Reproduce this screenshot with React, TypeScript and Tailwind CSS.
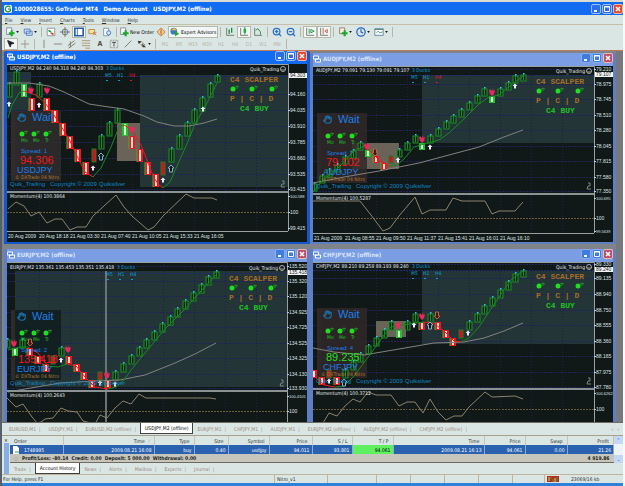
import React from "react";
import { Clock, Hand, Move, MousePointer2, ZoomIn, ZoomOut } from "lucide-react";

type CandleKind = "g" | "G" | "r" | "d";
type MarkKind = "up" | "sell" | "upOutline" | "downOutline";

interface Line {
  color: string;
  points: string;
}

interface ChartData {
  title: string;
  active?: boolean;
  clipped?: boolean;
  view: [number, number, number, number];
  axisX: number;
  paneY: number;
  paneBottom: number;
  quote: string;
  momentum: string;
  ducks: [number, number];
  ducksTitleX: number;
  thirdDuck: string;
  zones: [number, number, number, number][];
  range?: [number, number, number, number];
  panel: [number, number, number, number];
  panelFill: string;
  spread: string;
  price: string;
  priceFill: string;
  symbol: string;
  startX: number;
  barHeight: number;
  bars: string;
  lines: Line[];
  oscillator: string;
  marks: [number, number, MarkKind][];
  labels: [string, number][];
  current: [string, number];
  times: string[];
  timeY: number;
  scalper: [number, number];
  cursorX?: number;
}

const RED = "#f4161a";
const GREEN = "#178a20";
const SLOW = "#82827e";

const charts: ChartData[] = [
  {
    title: "USDJPY,M2 (offline)",
    active: true,
    view: [8, 64, 300, 178],
    axisX: 289,
    paneY: 191,
    paneBottom: 231,
    quote: "USDJPY,M2 94.240 94.318 94.240 94.303",
    momentum: "Momentum(4) 100.3864",
    ducks: [106, 70],
    ducksTitleX: 107,
    thirdDuck: "#e0142c",
    zones: [[8, 72, 24, 40], [141, 75, 148, 112]],
    range: [118, 123, 23, 38],
    panel: [12, 111, 50, 70],
    panelFill: "#302d2d",
    spread: "Spread: 1",
    price: "94.306",
    priceFill: "#f0181c",
    symbol: "USDJPY",
    startX: 9.5,
    barHeight: 13,
    bars: "84g 72g 84G 98r 84g 98r 110r 123r 136r 149r 162r 149d 136g 123g 110g 123G 136r 149r 162r 174r 162d 149g 136g 123g 110g 98g 84g 76g",
    lines: [
      { color: SLOW, points: "8,83 30,83 50,86 65,92 90,104 110,107 125,109 145,116 158,122 175,126 190,126 205,123 218,119" },
      { color: GREEN, points: "9,118 13,105 20,93 25,91" },
      { color: RED, points: "25,91 37,95 46,103 55,115 70,139 80,160 86,172 94,177" },
      { color: GREEN, points: "94,177 102,168 112,147 120,127 125,125" },
      { color: RED, points: "125,125 133,130 142,145 155,178 160,185 164,188" },
      { color: GREEN, points: "164,188 171,182 178,166 187,146 196,124 207,105 218,83" },
    ],
    oscillator: "9,209 17,202 25,206 32,216 40,212 48,223 56,219 63,219 71,230 78,227 87,227 94,216 117,195 125,207 133,216 141,223 149,230 155,227 164,216 187,194 195,198 213,198 218,200",
    marks: [[32, 90, "sell"], [48, 90, "sell"], [133, 129, "sell"], [40, 105, "up"], [10, 104, "up"], [94, 168, "up"], [164, 180, "up"], [204, 109, "up"], [102, 157, "upOutline"], [172, 169, "upOutline"]],
    labels: [["94.160", 94], ["94.035", 110], ["93.910", 126], ["93.785", 142], ["93.660", 158], ["93.535", 174], ["93.415", 189], ["100.588", 196], ["100", 212], ["99.415", 228]],
    current: ["94.303", 76],
    times: ["20 Aug 2009", "20 Aug 18:18", "21 Aug 03:30", "21 Aug 07:40", "21 Aug 10:05", "21 Aug 15:33", "21 Aug 16:05"],
    timeY: 238,
    scalper: [231, 82],
  },
  {
    title: "AUDJPY,M2 (offline)",
    view: [314, 67, 300, 176],
    axisX: 595,
    paneY: 194,
    paneBottom: 234,
    quote: "AUDJPY,M2 79.091 79.130 79.091 79.107",
    momentum: "Momentum(4) 100.5287",
    ducks: [412, 73],
    ducksTitleX: 413,
    thirdDuck: "#e0142c",
    zones: [[423, 76, 172, 68]],
    range: [353, 144, 47, 26],
    panel: [318, 114, 50, 70],
    panelFill: "#302828",
    spread: "Spread: 7",
    price: "79.102",
    priceFill: "#f0181c",
    symbol: "AUDJPY",
    startX: 315,
    barHeight: 7,
    bars: "185g 177g 171g 166g 158g 152g 144g 151G 157r 164r 157d 151g 144g 137g 144G 137g 130g 123g 117g 111g 104g 97g 90g 97G 90g 84g 77g 76g",
    lines: [
      { color: SLOW, points: "314,184 345,178 380,172 420,164 450,156 480,148 505,138 524,131" },
      { color: GREEN, points: "314,193 322,183 340,168 355,152 365,147" },
      { color: RED, points: "365,147 372,153 380,161 390,167" },
      { color: GREEN, points: "390,167 398,166 405,160 415,148 425,145 440,141 450,134 465,120 480,105 490,98 500,96 512,86 524,77" },
    ],
    oscillator: "314,202 361,202 372,216 384,232 391,229 400,217 416,198 423,215 431,211 447,211 454,199 463,202 486,202 493,215 500,212 516,212 524,203",
    marks: [[368, 147, "sell"], [423, 140, "sell"], [493, 93, "sell"], [376, 153, "downOutline"], [399, 161, "up"], [431, 148, "up"], [516, 87, "up"]],
    labels: [["79.210", 70], ["78.975", 85], ["78.745", 100], ["78.510", 116], ["78.280", 131], ["78.045", 147], ["77.815", 162], ["77.580", 178], ["77.350", 192], ["100.695", 199], ["100", 219], ["99.5639", 232]],
    current: ["79.107", 76],
    times: ["21 Aug 2009", "21 Aug 08:55", "21 Aug 09:50", "21 Aug 11:37", "21 Aug 15:41", "21 Aug 16:01", "21 Aug 16:10"],
    timeY: 241,
    scalper: [537, 85],
  },
  {
    title: "EURJPY,M2 (offline)",
    clipped: true,
    view: [7, 263, 300, 160],
    axisX: 287,
    paneY: 391,
    paneBottom: 440,
    quote: "EURJPY,M2 135.361 135.453 135.351 135.418",
    momentum: "Momentum(4) 100.2643",
    ducks: [106, 270],
    ducksTitleX: 117,
    thirdDuck: "#0ca0d0",
    zones: [[15, 272, 272, 116]],
    panel: [15, 311, 46, 70],
    panelFill: "#101c1f",
    spread: "Spread: 2",
    price: "135.418",
    priceFill: "#f0181c",
    symbol: "EURJPY",
    startX: 7,
    barHeight: 8,
    bars: "341g 349G 341g 349r 357r 365r 357d 349g 357r 365r 373r 381r 373d 381r 373g 365g 357g 349g 341g 333g 325g 318g 310g 302g 294g 286g 278g 273g",
    lines: [
      { color: SLOW, points: "8,393 25,390 60,384 95,382 120,381 145,376 175,364 195,355 216,344" },
      { color: GREEN, points: "8,351 20,348 28,348" },
      { color: RED, points: "28,348 38,354 48,367" },
      { color: GREEN, points: "48,367 58,368 67,365" },
      { color: RED, points: "67,365 76,367 85,378 95,388 108,390" },
      { color: GREEN, points: "108,390 116,388 123,382 135,366 150,348 165,330 185,310 200,293 216,276" },
    ],
    oscillator: "7,399 16,408 23,405 32,418 38,425 45,420 53,419 61,409 68,412 77,413 83,422 95,425 100,416 107,419 115,409 123,402 131,405 139,395 146,399 210,399 216,400",
    marks: [[14, 344, "sell"], [68, 350, "sell"], [107, 376, "sell"], [30, 343, "downOutline"], [61, 361, "up"], [100, 384, "up"], [115, 385, "up"]],
    labels: [["135.520", 267], ["135.320", 282], ["135.120", 297], ["134.925", 313], ["134.725", 328], ["134.525", 344], ["134.325", 359], ["134.130", 375], ["133.930", 389], ["100.4105", 397], ["100", 412]],
    current: ["135.418", 274],
    times: [],
    timeY: 440,
    scalper: [229, 282],
    cursorX: 106,
  },
  {
    title: "CHFJPY,M2 (offline)",
    clipped: true,
    view: [314, 263, 300, 160],
    axisX: 595,
    paneY: 389,
    paneBottom: 440,
    quote: "CHFJPY,M2 89.210 89.258 89.193 89.240",
    momentum: "Momentum(4) 100.3712",
    ducks: [412, 269],
    ducksTitleX: 413,
    thirdDuck: "#0ca0d0",
    zones: [[423, 272, 172, 73]],
    range: [377, 322, 30, 16],
    panel: [318, 309, 50, 70],
    panelFill: "#302828",
    spread: "Spread: 4",
    price: "89.235",
    priceFill: "#1fe01f",
    symbol: "CHFJPY",
    startX: 315,
    barHeight: 8,
    bars: "371r 378r 371d 378r 371g 363g 355g 347g 339g 331g 323g 331G 323g 315g 323r 315g 323r 331r 339r 331d 323g 315g 307g 299g 291g 283g 275g 272g",
    lines: [
      { color: SLOW, points: "314,349 335,353 365,356 400,350 435,344 465,343 485,339 505,332 524,324" },
      { color: RED, points: "316,378 325,386 336,388" },
      { color: GREEN, points: "336,388 345,387 355,377 370,357 385,336 392,328 410,325 425,323" },
      { color: RED, points: "425,323 436,325 446,333 455,342 462,343" },
      { color: GREEN, points: "462,343 470,339 480,328 490,313 502,295 512,281 524,272" },
    ],
    oscillator: "324,424 330,414 338,417 346,407 354,400 361,403 369,393 377,396 392,396 400,407 408,403 416,403 424,414 431,400 439,413 447,421 455,417 463,417 470,408 486,393 493,398 516,397 524,400",
    marks: [[399, 326, "sell"], [423, 317, "sell"], [438, 316, "downOutline"], [431, 327, "upOutline"], [415, 326, "up"], [330, 382, "up"], [469, 334, "up"], [345, 384, "upOutline"]],
    labels: [["89.330", 265], ["89.135", 279], ["88.940", 295], ["88.750", 311], ["88.555", 326], ["88.360", 342], ["88.165", 357], ["87.975", 373], ["87.780", 388], ["100.6262", 394], ["100", 410]],
    current: ["89.240", 271],
    times: [],
    timeY: 440,
    scalper: [537, 280],
  },
];

function Candle({ x, y, h, kind }: { x: number; y: number; h: number; kind: CandleKind }) {
  if (kind === "g") {
    return (
      <g>
        <rect x={x - 2} y={y} width="5" height={h} fill="#0e2a12" stroke="#1f8f2a" />
        <path d={`M${x + 0.5} ${y}v${h - 1}`} stroke="#23862c" />
        <rect x={x} y={y - 2} width="1.5" height="1.5" fill="#25d0e8" />
      </g>
    );
  }
  if (kind === "d") {
    return <rect x={x - 2} y={y} width="4" height={h} fill="#d8101c" stroke="#1f7a2a" />;
  }
  return (
    <g>
      <rect x={x - 3} y={y} width="6" height={h} fill={kind === "G" ? "#23c030" : "#f0141c"} />
      <rect x={x - 1} y={y + 1} width="2" height={h - 2} fill={kind === "G" ? "#d8ffd0" : "#ffe0d4"} />
      {kind === "r" && <path d={`M${x - 3} ${y}v${h}`} stroke="#3fae3c" />}
    </g>
  );
}

function Mark({ x, y, kind }: { x: number; y: number; kind: MarkKind }) {
  const up = "M0 -4L3 -1H1.5V3H-1.5V-1H-3Z";
  const down = "M0 4L3 1H1.5V-3H-1.5V1H-3Z";
  return (
    <g transform={`translate(${x} ${y})`}>
      {kind === "up" && <path d="M0 -2.5L2.5 0H1V2.5H-1V0H-2.5Z" fill="#e8ecf6" />}
      {kind === "upOutline" && <path d={up} fill="#101a1a" stroke="#86b0c8" />}
      {kind === "downOutline" && <path d={down} fill="#3a1c14" stroke="#c0643c" />}
      {kind === "sell" && <path d="M-2 -3L0 -1L1 -4L1.5 -1L3 -2L2 2L0 4L-2 2L-3 -1Z" fill="#e8285c" />}
    </g>
  );
}

function Bomb({ x, y }: { x: number; y: number }) {
  return (
    <g>
      <circle cx={x} cy={y} r="2.5" fill="#1ee01e" />
      <path d={`M${x + 2} ${y - 2}l2 -1l2 1M${x + 4} ${y - 3}v3`} stroke="#2a8a2c" fill="none" />
    </g>
  );
}

function Chart({ data }: { data: ChartData }) {
  const [vx, vy, vw, vh] = data.view;
  const { axisX, paneY, paneBottom, panel } = data;
  const [dx, dy] = data.ducks;
  const [sx, sy] = data.scalper;
  const px = vx + 4;
  const py = panel[1];
  const maxY = Math.min(paneBottom, vy + vh);
  return (
    <svg viewBox={`${vx} ${vy} ${vw} ${vh}`} className="block h-auto w-full bg-[#101918] font-['DejaVu_Sans_Condensed','DejaVu_Sans',sans-serif] text-[5px]">
      {data.zones.map(([x, y, w, h]) => (
        <rect key={x} x={x} y={y} width={w} height={h} fill="#233536" />
      ))}
      {/* Grid */}
      {data.labels.map(([label, y]) => (
        <path key={y} d={`M${vx} ${y + 0.5}H${axisX}`} stroke={label === "100" ? "#6d5c3a" : y > paneY ? "none" : "#1f2358"} strokeDasharray="2 1" />
      ))}
      {[1, 2, 3, 4, 5, 6, 7, 8].map((i) => (
        <path key={i} d={`M${vx + i * 31 + 1.5} ${vy}V${maxY}`} stroke="#1d2046" strokeDasharray="1 2" />
      ))}
      <path d={`M${vx} ${data.current[1] + 0.5}H${axisX}`} stroke="#1f2a6c" strokeDasharray="2 1" />

      {data.range && <rect x={data.range[0]} y={data.range[1]} width={data.range[2]} height={data.range[3]} fill="#6a6358" />}
      <rect x={px} y={py} width="4" height={panel[3]} fill="#302b2b" />
      <rect x={panel[0]} y={py} width={panel[2]} height={panel[3]} fill={data.panelFill} fillOpacity="0.85" />
      {data.cursorX && <rect x={data.cursorX - 1} y={vy + 9} width="2" height={vh} fill="#6a7476" />}

      {data.bars.split(" ").map((bar, i, all) => (
        <Candle
          key={i}
          x={Math.round(data.startX + i * 7.74)}
          y={parseInt(bar, 10)}
          h={i === all.length - 1 ? Math.min(data.barHeight, 6) : data.barHeight}
          kind={bar.slice(-1) as CandleKind}
        />
      ))}
      {data.lines.map((line, i) => (
        <polyline key={i} points={line.points} fill="none" stroke={line.color} />
      ))}
      {data.marks.map(([x, y, kind]) => (
        <Mark key={`${x}-${y}`} x={x} y={y} kind={kind} />
      ))}

      {/* Status panel */}
      <Hand x={px + 6} y={py + 2} width="9" height="9" color="#1e6fa8" strokeWidth="3" />
      <g className="font-['Liberation_Sans',sans-serif]">
        <text x={px + 21} y={py + 10} className="text-[11px]" fill="#1d7fe8">Wait</text>
        <text x={px + 10} y={py + 42} className="text-[6px]" fill="#1d7fe8">{data.spread}</text>
        <text x={data.price.length > 6 ? px + 7 : px + 9} y={py + 53} className="text-[11px]" fill={data.priceFill}>{data.price}</text>
        <text x={px + 6} y={py + 62} className="text-[9px]" fill="#1d7fe8">{data.symbol}</text>
        <text x={vx + 3} y={py + 75} className="text-[6px]" fill="#0e86c0">Quik_Trailing</text>
        <text x={vx + 43} y={py + 75} className="text-[6px]" fill="#0e86c0">Copyright © 2009</text>
        <text x={vx + 92} y={py + 75} className="text-[6px]" fill="#0e86c0">Quiksilver</text>
      </g>
      {["Mo", "Me", "Tr"].map((name, i) => (
        <g key={name}>
          <Bomb x={px + 11 + i * 12} y={py + 23} />
          <text x={px + 10 + i * 12} y={py + 31} fill="#22c02a">{name}</text>
        </g>
      ))}
      <text x={px + 4} y={py + 68} fill="#b07a30">© DXTrade 04 Nitro</text>

      {/* Scalper readout */}
      <g className="font-['Liberation_Mono',monospace] text-[8px] font-bold" fill="#a86c28">
        <text x={sx} y={sy}>C4 SCALPER</text>
        <text x={sx} y={sy + 19} xmlSpace="preserve">P | C | D</text>
        <text x={sx + 10} y={sy + 29} fill="#1ec028">C4 BUY</text>
      </g>
      {[3, 22, 42].map((o) => (
        <Bomb key={o} x={sx + o} y={sy + 7} />
      ))}

      <text x={vx + 3} y={dy} fill="#e4e8e8">{data.quote}</text>
      <text x={data.ducksTitleX} y={dy} fill="#0ca0d0">3 Ducks</text>
      {["M5", "H1", "H4"].map((tf, i) => (
        <g key={tf} fill={i === 2 ? data.thirdDuck : "#0ca0d0"}>
          <text x={dx + i * 12} y={dy + 7}>{tf}</text>
          <rect x={dx + 1 + i * 12} y={dy + 10} width="2" height="1" />
        </g>
      ))}
      <text x={axisX - 9} y={dy + 1} textAnchor="end" fill="#e4e8e8">Quik_Trading</text>
      <g fill="none" stroke="#a8acac">
        <circle cx={axisX - 5} cy={dy - 1} r="2.5" />
        <path d={`M${axisX - 6.5} ${dy - 0.5}q1.5 1.5 3 0`} />
      </g>
      <path d={`M${axisX - 6} ${paneY - 10}h2v3h-2l-1 3h4`} fill="none" stroke="#7c8484" />

      {/* Momentum pane */}
      <polyline points={data.oscillator} fill="none" stroke="#8c8270" />
      <text x={vx + 3} y={paneY + 7} fill="#e4e8e8">{data.momentum}</text>
      <rect x={vx} y={paneY} width={axisX - vx} height="2" fill="#8b9294" />
      <path d={`M${vx} ${vy + 0.5}H${axisX + 0.5}V${maxY}M${vx} ${paneBottom + 0.5}H${axisX}`} fill="none" stroke="#9aa0a0" />

      {/* Price scale */}
      <g className="font-['Liberation_Sans',sans-serif]">
        {data.labels.map(([label, y]) => (
          <g key={label}>
            <path d={`M${axisX} ${y + 0.5}h2`} stroke="#c8cccc" />
            <text x={axisX + 2} y={y + 2} className={y > paneY && label.length > 6 ? "text-[4px]" : "text-[5px]"} fill="#dfe3e3">{label}</text>
          </g>
        ))}
        <rect x={axisX + 1} y={data.current[1] - 3} width={vx + vw - axisX - 1} height="5" fill="#f4f6f6" />
        <text x={axisX + 2} y={data.current[1] + 1} fill="#202020">{data.current[0]}</text>
      </g>
      <g className="font-['Liberation_Sans',sans-serif]">
        {data.times.map((t, i) => (
          <text key={t} x={vx + 1 + i * 31} y={data.timeY} fill="#dfe3e3">{t}</text>
        ))}
      </g>
    </svg>
  );
}

function CaptionButtons({ dim }: { dim?: boolean }) {
  const face = dim ? "bg-[#3f7ce0] border-[#86aef0]" : "bg-[#2a6ee8] border-[#9cc0ff]";
  return (
    <div className="flex shrink-0 gap-px">
      <button aria-label="Minimize" className={`flex h-[10px] w-[10px] items-center justify-center rounded-xs border ${face}`}>
        <svg viewBox="0 0 8 8" className="h-2 w-2"><path d="M2 6h3" stroke="#fff" strokeWidth="2" /></svg>
      </button>
      <button aria-label="Restore" className={`flex h-[10px] w-[10px] items-center justify-center rounded-xs border ${face}`}>
        <svg viewBox="0 0 8 8" className="h-2 w-2"><path d="M1.5 1.5h5v5h-5zM1 2h6" stroke="#fff" fill="none" /></svg>
      </button>
      <button aria-label="Close" className={`flex h-[10px] w-[10px] items-center justify-center rounded-xs border border-[#f0b8b0] ${dim ? "bg-[#b84f6c]" : "bg-[#e2492c]"}`}>
        <svg viewBox="0 0 8 8" className="h-2 w-2"><path d="M2 2l4 4M6 2l-4 4" stroke="#fff" strokeWidth="1.5" /></svg>
      </button>
    </div>
  );
}

function ChartWindow({ data }: { data: ChartData }) {
  return (
    <section className={`rounded-t-xs border-x-3 ${data.clipped ? "" : "border-b-2"} ${data.active ? "border-[#1558cc]" : "border-[#5f7fc4]"}`}>
      <header className={`flex h-[13px] items-start gap-[2px] ${data.active ? "bg-[#116cf2] text-white" : "bg-[#7b9de4] text-[#d8e4f8]"}`}>
        <svg viewBox="0 0 8 8" className="mt-[2px] h-2 w-2"><path d="M0.5 1h5v3h-5zM2.5 4h5v3h-5z" fill="#4d84d8" stroke="#fff" /></svg>
        <h2 className="flex-1 truncate text-[6px]/[12px] font-semibold">{data.title}</h2>
        <CaptionButtons dim={!data.active} />
      </header>
      <Chart data={data} />
    </section>
  );
}

function Tool({ label, pressed, caret, children }: { label: string; pressed?: boolean; caret?: boolean; children: React.ReactNode }) {
  return (
    <button aria-label={label} className={`flex h-3 shrink-0 items-center justify-center ${caret ? "w-[18px] gap-px" : "w-[14px]"} ${pressed ? "border border-[#b8b8aa] bg-[#f2f6f6]" : ""}`}>
      <svg viewBox="0 0 12 12" className="h-[10px] w-[10px]" fill="none">{children}</svg>
      {caret && <svg viewBox="0 0 4 3" className="h-[2px] w-[3px]"><path d="M0 0h4L2 3z" fill="#111" /></svg>}
    </button>
  );
}

function Divider() {
  return <div className="mx-[2px] h-[10px] w-px shrink-0 bg-[#b9b6a4]" />;
}

const axes = "M2 1v9h9";

const terminalTabs = ["Trade", "Account History", "News", "Alerts", "Mailbox", "Experts", "Journal"];
const chartTabs = [
  "EURUSD,M1", "USDJPY,M1", "EURUSD,M2 (offline)", "USDJPY,M2 (offline)", "EURJPY,M1",
  "CHFJPY,M1", "AUDJPY,M1", "EURJPY,M2 (offline)", "AUDJPY,M2 (offline)", "CHFJPY,M2 (offline)",
];

const columns: [string, string, string][] = [
  ["Order", "1748995", "w-[53px]"],
  ["Time", "2009.08.21 16:08", "w-[91px]"],
  ["Type", "buy", "w-[40px]"],
  ["Size", "0.40", "w-[34px]"],
  ["Symbol", "usdjpy", "w-[41px]"],
  ["Price", "94.011", "w-[43px]"],
  ["S / L", "93.801", "w-[40px]"],
  ["T / P", "94.061", "w-[41px]"],
  ["Time", "2009.08.21 16:13", "w-[91px]"],
  ["Price", "94.061", "w-[41px]"],
  ["Swap", "0.00", "w-[42px]"],
  ["Profit", "21.26", "w-auto"],
];

function TabStrip({ tabs, selected }: { tabs: string[]; selected: string }) {
  return (
    <div role="tablist" className="flex h-[11px] items-stretch">
      {tabs.map((tab) => (
        <button
          key={tab}
          role="tab"
          aria-selected={tab === selected}
          className={`shrink-0 px-1 whitespace-nowrap ${tab === selected ? "border border-t-0 border-[#404040] bg-white text-black" : "text-[#a08a80]"}`}
        >
          {tab}
          {tab !== selected && <span className="pl-[3px]">|</span>}
        </button>
      ))}
    </div>
  );
}

export default function App() {
  return (
    <div className="border-l-2 border-[#55606a] bg-[#f6faf8] pr-[2px] font-['DejaVu_Sans_Condensed','DejaVu_Sans',sans-serif] text-[5px]/[8px] text-[#303030]">
      <div className="bg-[#dae6e4]">
        {/* Title bar */}
        <header className="flex h-[15px] items-center gap-[2px] border-t-2 border-[#d8dcd4] bg-[#116cf2] pl-[2px] text-white">
          <svg viewBox="0 0 10 10" className="h-2 w-2">
            <rect width="10" height="10" rx="2" fill="#e8f4ea" />
            <path d="M8 3a3.5 3.5 0 1 0 0 4V5H5" fill="none" stroke="#168a3c" strokeWidth="1.5" />
          </svg>
          <h1 className="flex-1 text-[6px]/[12px] font-semibold whitespace-pre">1000028655: GoTrader MT4   Demo Account   USDJPY,M2 (offline)</h1>
          <CaptionButtons />
        </header>

        <nav className="flex h-[9px] items-center gap-2 px-[3px]">
          {["File", "View", "Insert", "Charts", "Tools", "Window", "Help"].map((item) => (
            <button key={item}><span className="underline">{item[0]}</span>{item.slice(1)}</button>
          ))}
        </nav>

        {/* Standard toolbar */}
        <div className="flex h-[14px] items-center border-t border-[#c8bfa8] pl-px">
          <Tool label="New chart" caret><path d="M2 1h6v8H2z" fill="#fff" stroke="#708090" /><path d="M8 4v7M4.5 7.5h7" stroke="#18a828" strokeWidth="2.5" /></Tool>
          <Tool label="Profiles" caret><path d="M1.5 2.5h7v5h-7zM4 5h7v5H4z" fill="#cfe0f8" stroke="#4878b8" /></Tool>
          <Divider />
          <Tool label="Market watch"><path d="M1.5 1.5h9v9h-9z" fill="#fff" stroke="#888" /><path d="M3 4l3 2" stroke="#18a030" strokeWidth="2" /><path d="M6 7l3 2" stroke="#d04020" strokeWidth="2" /></Tool>
          <Tool label="Data window"><circle cx="6" cy="6" r="3.5" stroke="#666" /><path d="M6 0v12M0 6h12" stroke="#666" /></Tool>
          <Tool label="Navigator" pressed><path d="M1 1.5h10v9H1z" fill="#fff" stroke="#2860b0" strokeWidth="2" /><path d="M4 2v8" stroke="#2860b0" /></Tool>
          <Tool label="Terminal"><path d="M1 3h7v5H1z" fill="#f4e0a0" stroke="#b08840" /><path d="M6 6l4 4M10 6l-4 4" stroke="#d07030" /></Tool>
          <Tool label="Strategy tester"><path d="M2 1.5h6v9H2z" fill="#fff" stroke="#7088a8" /><circle cx="8" cy="7" r="2.5" fill="#cfe4ff" stroke="#3870b8" /></Tool>
          <Divider />
          <button className="flex h-3 shrink-0 items-center gap-px whitespace-nowrap text-black">
            <svg viewBox="0 0 12 12" className="h-[10px] w-[10px]"><path d="M2 1h6v8H2z" fill="#fff" stroke="#708090" /><path d="M8 4v7M4.5 7.5h7" stroke="#18a828" strokeWidth="2.5" /></svg>
            New Order
          </button>
          <Tool label="MetaEditor"><path d="M6 1l5 5-5 5-5-5z" fill="#f0c890" stroke="#c07830" /><path d="M6 3v6" stroke="#a04818" /></Tool>
          <button className="flex h-3 shrink-0 items-center gap-px border border-[#b8b8aa] bg-[#f2f6f6] px-px whitespace-nowrap text-black">
            <svg viewBox="0 0 12 12" className="h-[10px] w-[10px]"><circle cx="4.5" cy="5" r="4" fill="#3c78c0" /><path d="M1 4l4-3 4 3z" fill="#e8c040" /><path d="M6 5l5 3-5 3z" fill="#18a828" /></svg>
            Expert Advisors
          </button>
          <Divider />
          <Tool label="Bar chart"><path d={axes} stroke="#607060" /><path d="M5 3v5M8 1v6" stroke="#188838" strokeWidth="1.5" /></Tool>
          <Tool label="Candlesticks" pressed><path d={axes} stroke="#607060" /><path d="M7 0v9" stroke="#188838" /><path d="M5.5 2h3v5h-3z" fill="#20b038" /></Tool>
          <Tool label="Line chart"><path d={axes} stroke="#607060" /><path d="M3 4l3-2 3 4v3" stroke="#188838" /></Tool>
          <Divider />
          <Tool label="Zoom in"><ZoomIn width="12" height="12" color="#3070c0" strokeWidth="3" /></Tool>
          <Tool label="Zoom out"><ZoomOut width="12" height="12" color="#3070c0" strokeWidth="3" /></Tool>
          <Divider />
          <Tool label="Auto scroll" pressed><path d={axes} stroke="#607060" /><path d="M5 2v6M7 3l4 2-4 2z" stroke="#188838" /></Tool>
          <Tool label="Chart shift" pressed><path d={axes} stroke="#607060" /><path d="M5 1v8M10 3l-3 2 3 2z" stroke="#b05838" /></Tool>
          <Divider />
          <Tool label="Indicators" caret><path d="M2 1h6v7H2z" fill="#f4efe0" stroke="#907050" /><path d="M8 4v7M4.5 7.5h7" stroke="#18a828" strokeWidth="2.5" /></Tool>
          <Tool label="Periods" caret><Clock width="12" height="12" color="#2868c0" strokeWidth="3" /></Tool>
          <Tool label="Templates" caret><path d="M1 2h10v8H1z" fill="#fff" stroke="#507898" /><path d="M1 3h10M3 7l2-2 2 2 3-1" stroke="#488068" /></Tool>
          <Divider />
        </div>

        {/* Line studies toolbar */}
        <div className="flex h-[13px] items-center border-b border-[#c07a60] pl-[2px]">
          <Tool label="Cursor" pressed><MousePointer2 width="11" height="11" color="#222" fill="#222" /></Tool>
          <Tool label="Crosshair"><path d="M6 1v10M1 6h10" stroke="#998c80" /></Tool>
          <Divider />
          <Tool label="Vertical line"><path d="M6 1v10" stroke="#807870" /></Tool>
          <Tool label="Horizontal line"><path d="M1 6h10" stroke="#807870" /></Tool>
          <Tool label="Channel"><path d="M1 8l8-6M2 11l8-6M4 3v7" stroke="#706860" /></Tool>
          <Tool label="Fibonacci"><path d="M1 2h10M1 5h10M1 8h10M5 11h6" stroke="#a08c60" /></Tool>
          <button className="w-[14px] shrink-0 text-[7px]/[12px] font-bold text-[#504840]">A</button>
          <Tool label="Text label"><path d="M1.5 1.5h9v9h-9z" stroke="#888" strokeDasharray="2 1" /><path d="M3.5 4h5M6 4v5" stroke="#403830" /></Tool>
          <Tool label="Trend line"><path d="M2 10l8-8" stroke="#706860" /></Tool>
          <Tool label="Arrows" caret><path d="M1 2l5 1-4 3zM6 6l5 4H7z" fill="#383028" /><Move x="4" y="4" width="6" height="6" color="#604838" /></Tool>
          <Divider />
          {["M1", "M5", "M15", "M30", "H1", "H4", "D1", "W1", "MN"].map((tf) => (
            <button key={tf} className="w-[14px] shrink-0 text-center text-[#b4b2a6]">{tf}</button>
          ))}
          <Divider />
        </div>

        {/* Chart workspace */}
        <main className="grid grid-cols-2 gap-y-[5px] border-r-7 border-[#77797c] bg-[#808488] pl-[2px]">
          {charts.map((chart) => (
            <div key={chart.title} className={chart.clipped ? "self-start" : "self-end"}>
              <ChartWindow data={chart} />
            </div>
          ))}
        </main>

        <div className="flex justify-between border-t border-[#706a60] pl-[3px]">
          <TabStrip tabs={chartTabs} selected="USDJPY,M2 (offline)" />
          <div className="flex gap-1 pr-1 text-[#908478]">
            <button aria-label="Previous charts">‹</button>
            <button aria-label="Next charts">›</button>
          </div>
        </div>

        {/* Terminal */}
        <section className="mt-px flex border-t border-[#a8a08c]">
          <div className="flex w-[8px] shrink-0 flex-col items-center">
            <button aria-label="Close terminal" className="h-[7px] leading-[6px] text-black">×</button>
            <div className="w-[5px] flex-1 bg-[#88aee4]" />
          </div>
          <div className="min-w-0 flex-1">
            <div className="flex">
              <div className="h-[27px] min-w-0 flex-1 overflow-hidden border-b border-[#706a60]">
                <table className="w-full table-fixed border-collapse">
                  <thead>
                    <tr className="h-[9px]">
                      {columns.map(([name, , width], i) => (
                        <th key={i} className={`${width} border-r border-[#c8c4b0] px-1 py-0 font-normal ${i === 0 ? "text-left" : "text-right"}`}>
                          {name}{i === 1 && <span className="pl-1 text-[#a09c90]">⁄</span>}
                        </th>
                      ))}
                    </tr>
                  </thead>
                  <tbody>
                    <tr className="h-[9px] bg-[#2a62b0] text-white">
                      {columns.map(([, value], i) => (
                        <td key={i} className={`border-r border-[#88aadc] p-0 pr-[2px] ${i === 0 ? "text-left" : "text-right"} ${i === 7 ? "bg-[#5ff060] text-black" : ""}`}>
                          {i === 0 ? (
                            <span className="flex items-center gap-1 pl-[2px]">
                              <svg viewBox="0 0 8 8" className="h-2 w-2"><path d="M1 0h4l2 2v6H1z" fill="#fff" /><path d="M3 6h4" stroke="#40a060" /></svg>
                              {value}
                            </span>
                          ) : value}
                        </td>
                      ))}
                    </tr>
                    <tr className="h-2 bg-[#c6c6bc] font-bold text-[#202020]">
                      <td colSpan={11} className="p-0 pl-1">
                        <span className="pr-1 text-[#888]">○</span>Profit/Loss: -80.14&nbsp; Credit: 0.00&nbsp; Deposit: 5 000.00&nbsp; Withdrawal: 0.00
                      </td>
                      <td className="p-0 pr-1 text-right">4 919.86</td>
                    </tr>
                  </tbody>
                </table>
              </div>
              <div className="flex w-[9px] flex-col justify-between bg-[#eef4f6] text-center text-[#3868b0]">
                <button aria-label="Scroll up" className="bg-[#c4d8f6]">⌃</button>
                <button aria-label="Scroll down" className="bg-[#c4d8f6]">⌄</button>
              </div>
            </div>
            <TabStrip tabs={terminalTabs} selected="Account History" />
          </div>
        </section>

        {/* Status bar */}
        <footer className="flex h-[9px] items-center border-t border-[#c0b49c]">
          <span className="flex-1 pl-px">For Help, press F1</span>
          <span className="w-[53px] border-l border-[#c0b49c] pl-[2px]">Nitro_v1</span>
          {["a", "b", "c", "d", "e"].map((cell, i) => (
            <span key={cell} className={`h-2 border-l border-[#c0b49c] ${i === 0 ? "w-[49px]" : "w-[34px]"}`} />
          ))}
          <span className="h-2 w-[32px] border-l border-[#c0b49c]" />
          <span className="flex w-[79px] items-center gap-3 border-l border-[#c0b49c] pl-[2px]">
            <svg viewBox="0 0 12 6" className="h-[6px] w-3"><path d="M0 0h12v6H0z" fill="#b82c20" /><path d="M2 1v4M8 2v4" stroke="#e8d040" /><path d="M4 1v2M6 3v3M10 1v4" stroke="#30a040" /></svg>
            23069/16 kb
          </span>
        </footer>
      </div>
      <div className="h-[3px] bg-[#2f80d8]" />
    </div>
  );
}
